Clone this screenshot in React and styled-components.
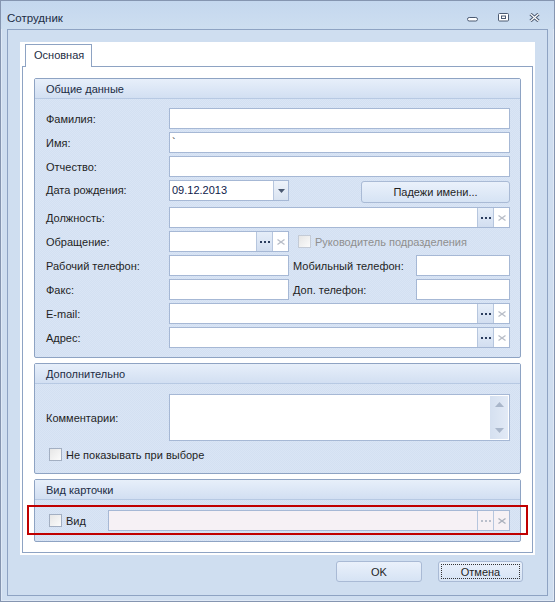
import styled, { createGlobalStyle } from "styled-components";

const GlobalStyle = createGlobalStyle`
  html, body { margin: 0; padding: 0; background: #cfdef0; }
  body {
    font-family: "Liberation Sans", Arial, sans-serif;
    font-size: 11px;
    color: #1f1f1f;
  }
  * { box-sizing: border-box; }
`;

const dither = `repeating-conic-gradient(#d3e0f2 0 25%, #dae5f5 0 50%) 0 0 / 2px 2px`;

const Window = styled.div`
  width: 555px;
  height: 602px;
  border: 1px solid #8595b0;
  box-shadow: inset 0 0 0 1px #dfe9f6;
  background: #cfdef0;
  display: flex;
  flex-direction: column;
`;

const TitleBar = styled.div`
  height: 28px;
  display: flex;
  align-items: flex-start;
  padding: 10px 0 0 6px;
  background: linear-gradient(#c4d7ee, #cddef0);
  color: #1c2c44;
  font-size: 11.5px;
  line-height: 14px;
`;

const TitleButtons = styled.div`
  margin-left: auto;
  margin-top: 2px;
  padding-right: 14px;
  display: flex;
  gap: 20px;
  svg { display: block; }
`;

const Frame = styled.div`
  flex: 1;
  margin: 0 6px 5px 6px;
  border: 1px solid #8ea3c3;
  padding: 12px 12px 0 12px;
  display: flex;
  flex-direction: column;
`;

const WhitePanel = styled.div`
  height: 513px;
  background: #fff;
  padding: 2px;
  display: flex;
  flex-direction: column;
`;

const TabStrip = styled.div`
  height: 22px;
  display: flex;
  padding-left: 3px;
  position: relative;
  z-index: 1;
`;

const Tab = styled.div`
  width: 67px;
  height: 23px;
  border: 1px solid #8ea3c3;
  border-bottom: none;
  background: #fff;
  padding: 4px 0 0 8px;
  color: #1c2c44;
`;

const TabPage = styled.div`
  flex: 1;
  border: 1px solid #8ea3c3;
  padding: 11px 11px 9px 11px;
  display: flex;
  flex-direction: column;
  gap: 5px;
`;

const Group = styled.div`
  position: relative;
  border: 1px solid #8ea3c3;
  border-radius: 2px;
  background: ${dither};
`;

const GroupHeader = styled.div`
  height: 20px;
  border-bottom: 1px solid #b7c9e3;
  background: linear-gradient(#e7effa, #d2dff2);
  padding: 4px 0 0 11px;
  color: #1c2c44;
`;

const GroupBody = styled.div`
  padding: ${(p) => p.$pad || "9px 10px 9px 11px"};
  display: flex;
  flex-direction: column;
  gap: ${(p) => p.$gap || "3px"};
`;

const Row = styled.div`
  display: flex;
  align-items: ${(p) => (p.$top ? "flex-start" : "center")};
  height: ${(p) => p.$h || 21}px;
`;

const Label = styled.div`
  width: ${(p) => p.$w || 123}px;
  flex: none;
  margin-left: ${(p) => p.$ml || 0}px;
  padding-top: ${(p) => (p.$top ? 4 : 0)}px;
`;

const Field = styled.div`
  display: flex;
  height: 21px;
  width: ${(p) => (p.$w ? `${p.$w}px` : "auto")};
  flex: ${(p) => (p.$w ? "none" : 1)};
  margin-left: ${(p) => p.$ml || 0}px;
  border: 1px solid #a6b8d5;
  background: ${(p) => (p.$disabled ? "#f6f1f5" : "#fff")};
`;

const FieldText = styled.div`
  flex: 1;
  padding: 3px 0 0 2px;
  color: ${(p) => p.$color || "#1f1f1f"};
  white-space: nowrap;
  overflow: hidden;
`;

const segBg = {
  dots: "linear-gradient(#e6eef9, #d2def0)",
  drop: "linear-gradient(#eef3fa, #d9e3f1)",
  off: "#f6f1f5",
  plain: "#fff",
};

const Seg = styled.div`
  width: ${(p) => p.$w || 16}px;
  flex: none;
  border-left: 1px solid #b6c6de;
  display: flex;
  align-items: center;
  justify-content: center;
  background: ${(p) => segBg[p.$kind || "plain"]};
  svg { display: block; }
`;

const PushButton = styled.button`
  width: ${(p) => p.$w}px;
  height: ${(p) => p.$h || 21}px;
  margin-left: ${(p) => (p.$auto ? "auto" : "0")};
  margin-top: ${(p) => p.$mt || 0}px;
  border: 1px solid #a9bad5;
  border-radius: 3px;
  background: linear-gradient(#eaf1fb, #d6e3f4);
  font-family: inherit;
  font-size: 11px;
  color: #1f1f1f;
  padding: 0;
  position: relative;
  ${(p) =>
    p.$focused &&
    `&::after {
      content: "";
      position: absolute;
      inset: 2px;
      border: 1px dotted #333;
    }`}
`;

const Check = styled.span`
  width: 13px;
  height: 13px;
  flex: none;
  margin-left: ${(p) => p.$ml || 0}px;
  margin-right: ${(p) => p.$mr || 4}px;
  border: 1px solid ${(p) => (p.$disabled ? "#c4cbd6" : "#a3afc2")};
  background: linear-gradient(135deg, #e6e6e6, #fbfbfb);
`;

const CheckLabel = styled.span`
  color: ${(p) => (p.$disabled ? "#8f8f8f" : "#1f1f1f")};
  white-space: nowrap;
`;

const TextArea = styled.div`
  flex: 1;
  height: 47px;
  border: 1px solid #a6b8d5;
  background: #fff;
  display: flex;
  justify-content: flex-end;
`;

const ScrollCol = styled.div`
  width: 18px;
  margin: 1px 1px 1px 0;
  background: linear-gradient(90deg, #d5e0f0, #e2eaf6);
  display: flex;
  flex-direction: column;
  justify-content: space-between;
  align-items: center;
  padding: 6px 0 6px;
  svg { display: block; }
`;

const Highlight = styled.div`
  position: absolute;
  top: 25px;
  left: -8px;
  width: 501px;
  height: 30px;
  border: 2px solid #c00000;
  pointer-events: none;
`;

const Footer = styled.div`
  display: flex;
  justify-content: flex-end;
  gap: 16px;
  padding: 6px 12px 0 0;
`;

const Dots = ({ c = "#2b3d5e" }) => (
  <svg width="10" height="2">
    <rect x="0" y="0" width="2" height="2" fill={c} />
    <rect x="4" y="0" width="2" height="2" fill={c} />
    <rect x="8" y="0" width="2" height="2" fill={c} />
  </svg>
);

const Cross = ({ c = "#b9bec8" }) => (
  <svg width="8" height="6">
    <path d="M0.5 0.5 L7.5 5.5 M7.5 0.5 L0.5 5.5" stroke={c} strokeWidth="1.3" />
  </svg>
);

const Picker = ({ w }) => (
  <Field $w={w}>
    <FieldText />
    <Seg $kind="dots">
      <Dots />
    </Seg>
    <Seg>
      <Cross />
    </Seg>
  </Field>
);

const Icons = () => (
  <TitleButtons>
    <svg width="11" height="9">
      <rect x="0.5" y="4.5" width="10" height="3.5" rx="1.7" fill="#fff" stroke="#4b5a72" />
    </svg>
    <svg width="11" height="9">
      <rect x="0.5" y="0.5" width="10" height="7.5" rx="1" fill="#fff" stroke="#4b5a72" />
      <rect x="3.5" y="3" width="4" height="2.5" fill="none" stroke="#4b5a72" />
    </svg>
    <svg width="11" height="9">
      <path d="M1.5 1 L9.5 8 M9.5 1 L1.5 8" stroke="#4b5a72" strokeWidth="3.2" />
      <path d="M1.5 1 L9.5 8 M9.5 1 L1.5 8" stroke="#fff" strokeWidth="1.2" />
    </svg>
  </TitleButtons>
);

export default function App() {
  return (
    <>
      <GlobalStyle />
      <Window>
        <TitleBar>
          Сотрудник
          <Icons />
        </TitleBar>
        <Frame>
          <WhitePanel>
            <TabStrip>
              <Tab>Основная</Tab>
            </TabStrip>
            <TabPage>
              <Group>
                <GroupHeader>Общие данные</GroupHeader>
                <GroupBody>
                  <Row>
                    <Label>Фамилия:</Label>
                    <Field><FieldText /></Field>
                  </Row>
                  <Row>
                    <Label>Имя:</Label>
                    <Field><FieldText>`</FieldText></Field>
                  </Row>
                  <Row>
                    <Label>Отчество:</Label>
                    <Field><FieldText /></Field>
                  </Row>
                  <Row $h={24} $top>
                    <Label $top>Дата рождения:</Label>
                    <Field $w={120}>
                      <FieldText $color="#0e1a4a">09.12.2013</FieldText>
                      <Seg $kind="drop" $w={15}>
                        <svg width="7" height="4">
                          <path d="M0 0 H7 L3.5 4 Z" fill="#4a5870" />
                        </svg>
                      </Seg>
                    </Field>
                    <PushButton $w={149} $h={22} $mt={1} $auto>
                      Падежи имени...
                    </PushButton>
                  </Row>
                  <Row>
                    <Label>Должность:</Label>
                    <Picker />
                  </Row>
                  <Row>
                    <Label>Обращение:</Label>
                    <Picker w={120} />
                    <Check $ml={9} $disabled />
                    <CheckLabel $disabled>Руководитель подразделения</CheckLabel>
                  </Row>
                  <Row>
                    <Label>Рабочий телефон:</Label>
                    <Field $w={120}><FieldText /></Field>
                    <Label $ml={4}>Мобильный телефон:</Label>
                    <Field><FieldText /></Field>
                  </Row>
                  <Row>
                    <Label>Факс:</Label>
                    <Field $w={120}><FieldText /></Field>
                    <Label $ml={4}>Доп. телефон:</Label>
                    <Field><FieldText /></Field>
                  </Row>
                  <Row>
                    <Label>E-mail:</Label>
                    <Picker />
                  </Row>
                  <Row>
                    <Label>Адрес:</Label>
                    <Picker />
                  </Row>
                </GroupBody>
              </Group>

              <Group>
                <GroupHeader>Дополнительно</GroupHeader>
                <GroupBody $pad="10px 10px 12px 11px" $gap="7px">
                  <Row $h={47}>
                    <Label>Комментарии:</Label>
                    <TextArea>
                      <ScrollCol>
                        <svg width="9" height="5">
                          <path d="M0 5 H9 L4.5 0 Z" fill="#a9b6ca" />
                        </svg>
                        <svg width="9" height="5">
                          <path d="M0 0 H9 L4.5 5 Z" fill="#a9b6ca" />
                        </svg>
                      </ScrollCol>
                    </TextArea>
                  </Row>
                  <Row $h={13}>
                    <Check $ml={3} />
                    <CheckLabel>Не показывать при выборе</CheckLabel>
                  </Row>
                </GroupBody>
              </Group>

              <Group>
                <GroupHeader>Вид карточки</GroupHeader>
                <GroupBody $pad="10px 10px 10px 11px">
                  <Row>
                    <Check $ml={3} />
                    <CheckLabel>Вид</CheckLabel>
                    <Field $ml={22} $disabled>
                      <FieldText />
                      <Seg $kind="off">
                        <Dots c="#b9bfcb" />
                      </Seg>
                      <Seg $kind="off">
                        <Cross c="#aab0bc" />
                      </Seg>
                    </Field>
                  </Row>
                </GroupBody>
                <Highlight />
              </Group>
            </TabPage>
          </WhitePanel>
          <Footer>
            <PushButton $w={86}>OK</PushButton>
            <PushButton $w={85} $focused>Отмена</PushButton>
          </Footer>
        </Frame>
      </Window>
    </>
  );
}
